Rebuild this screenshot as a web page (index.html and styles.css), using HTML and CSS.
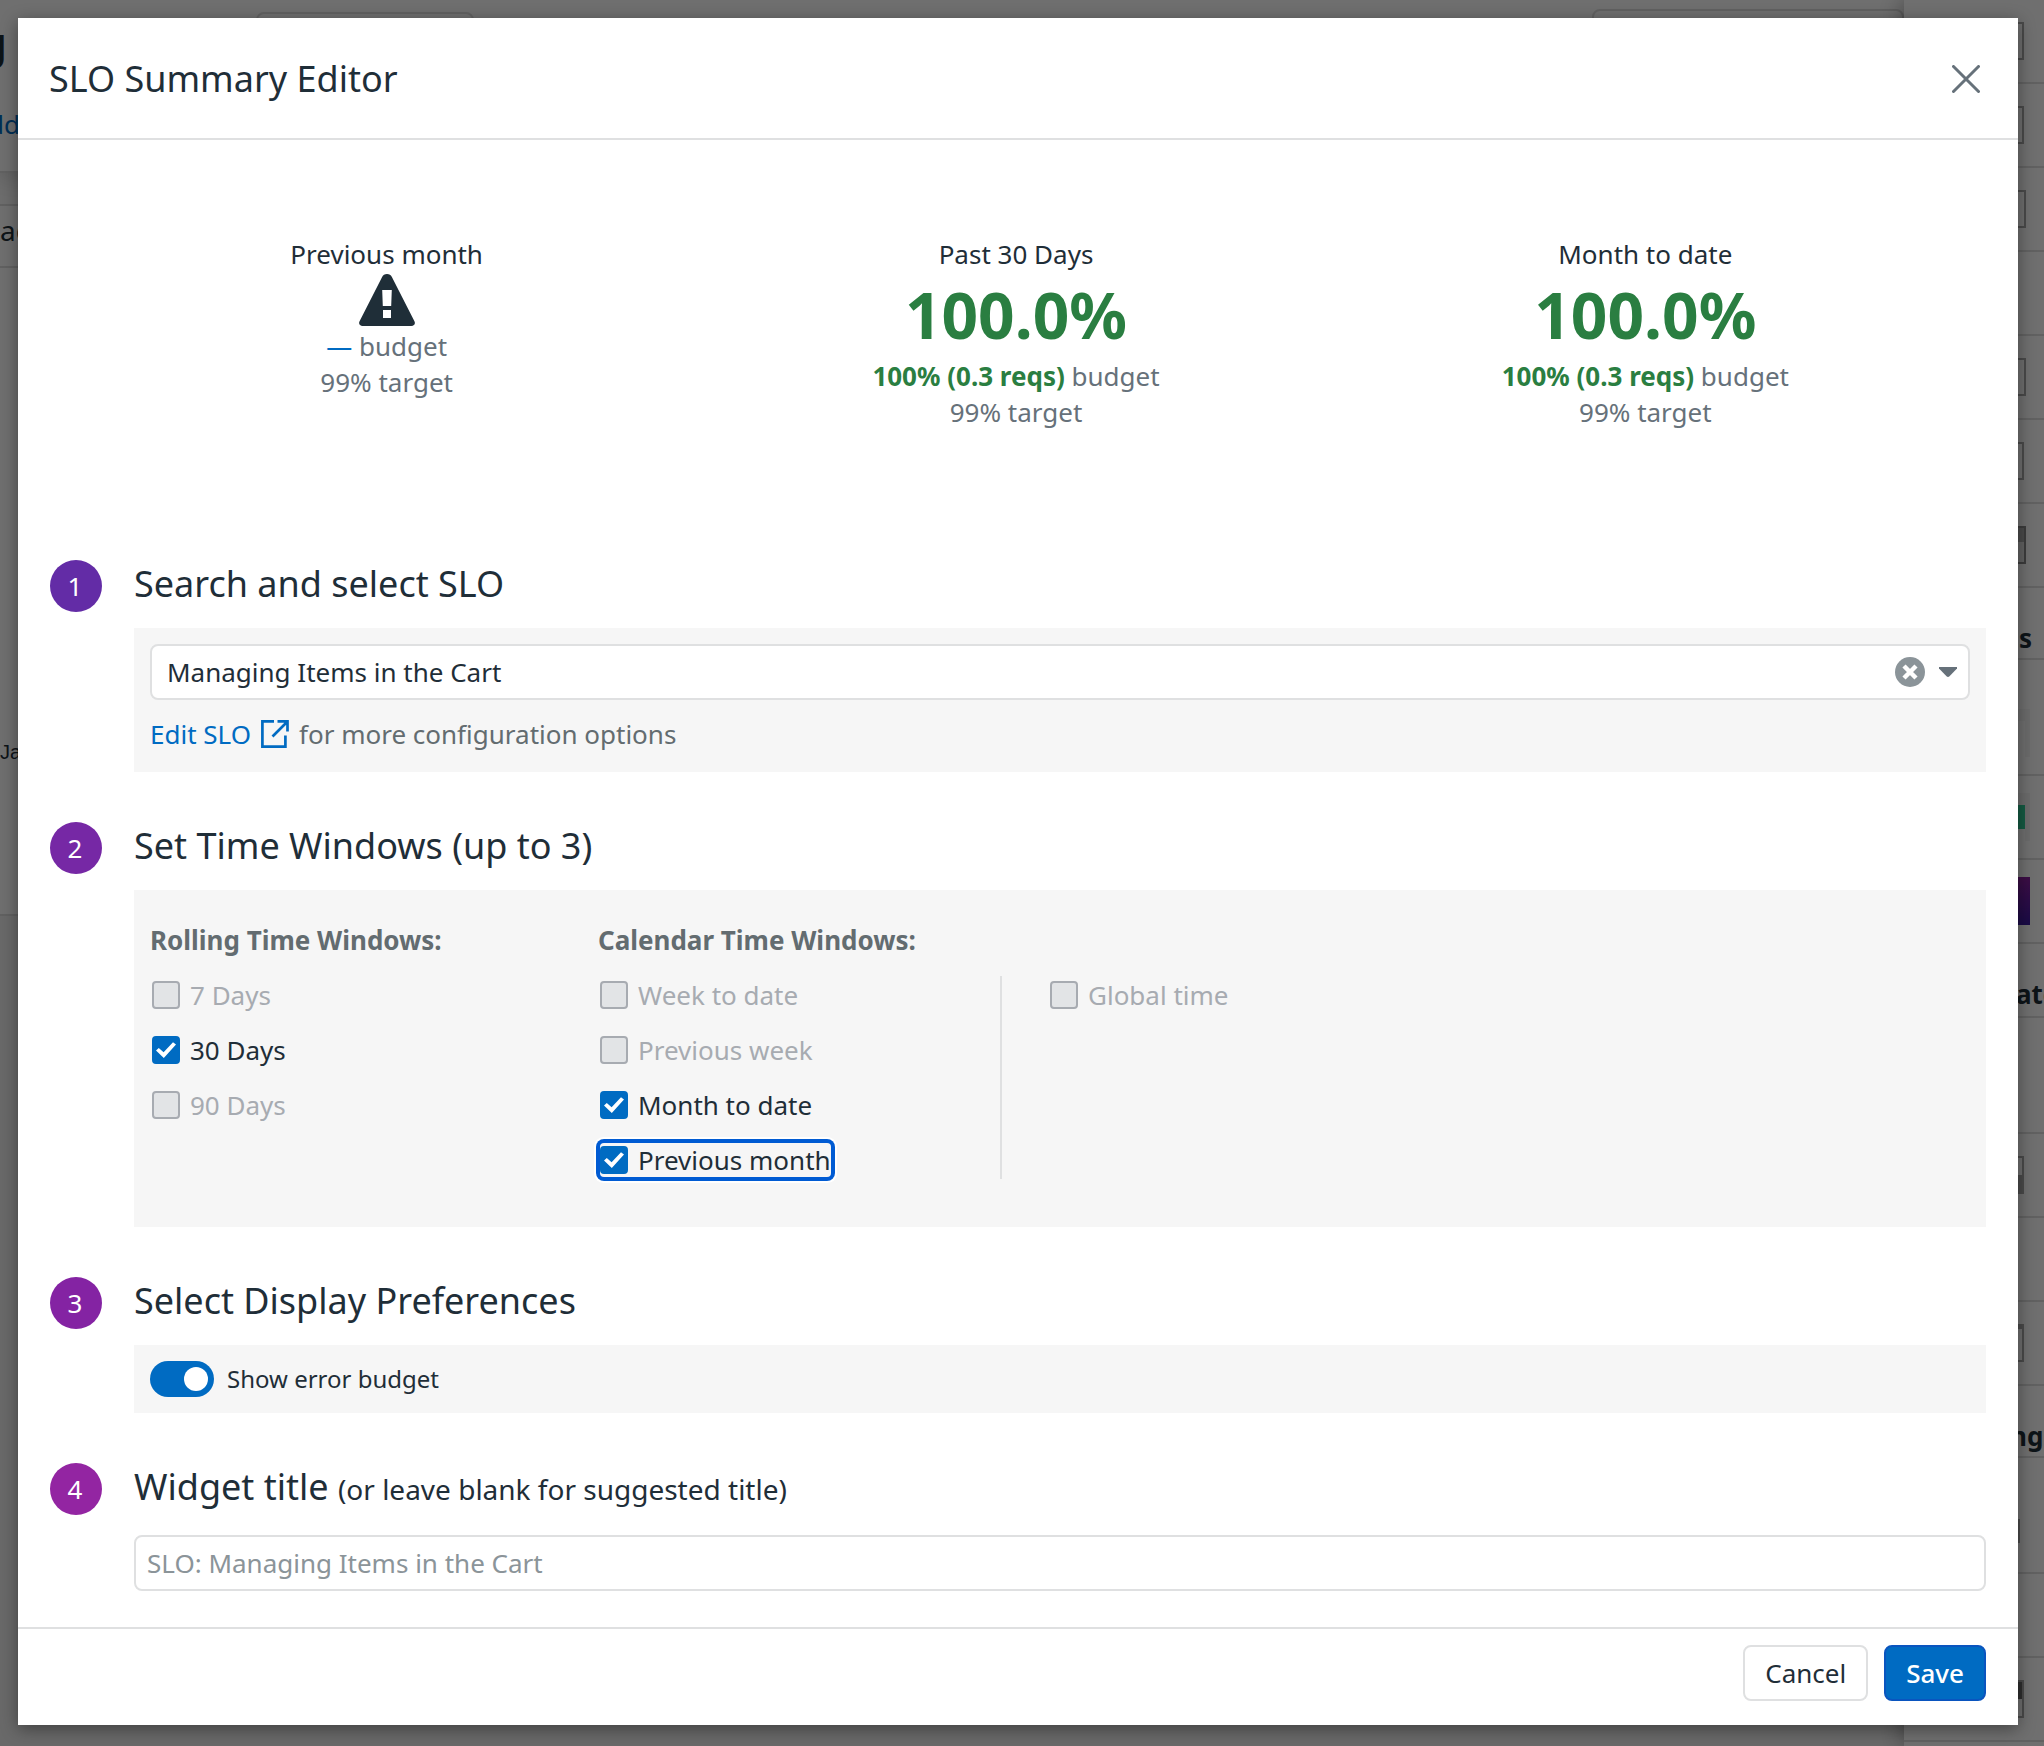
FILE: index.html
```html
<!DOCTYPE html>
<html lang="en">
<head>
<meta charset="utf-8">
<meta name="viewport" content="width=device-width, initial-scale=1">
<title>SLO Summary Editor</title>
<link rel="stylesheet" href="styles.css">
</head>
<body>
<div class="app">
  <!-- Dashboard underneath the dialog -->
  <div class="dashboard" aria-hidden="true">
    <div class="board">
      <div class="board-head">
        <div class="board-name">g</div>
        <div class="board-action">dd</div>
        <div class="search-outline"></div>
        <div class="time-outline"></div>
      </div>
      <div class="board-filter">ag</div>
      <div class="board-chart">Ja</div>
      <div class="board-rest"></div>
    </div>
    <div class="tray">
      <div class="tray-row"><span class="thumb"></span></div>
      <div class="tray-row"><span class="thumb"></span></div>
      <div class="tray-row"><span class="thumb thumb-wide"></span></div>
      <div class="tray-row"></div>
      <div class="tray-row"><span class="thumb thumb-wide"></span></div>
      <div class="tray-row"><span class="thumb"></span></div>
      <div class="tray-row"><span class="thumb thumb-wide thumb-blocks"></span></div>
      <div class="tray-title tray-title-s">s</div>
      <div class="tray-row tray-row-first"><span class="tile"></span></div>
      <div class="tray-row"><span class="tile tile-green"></span></div>
      <div class="tray-row"><span class="tile tile-purple"></span></div>
      <div class="tray-title tray-title-ate">ate</div>
      <div class="tray-row tray-row-first"></div>
      <div class="tray-row"><span class="thumb thumb-area"></span></div>
      <div class="tray-row"></div>
      <div class="tray-row"><span class="thumb thumb-head"></span></div>
      <div class="tray-title tray-title-ng">ng</div>
      <div class="tray-row tray-row-first"><span class="thumb thumb-small"></span></div>
      <div class="tray-row"></div>
      <div class="tray-row"><span class="thumb thumb-dark"></span></div>
    </div>
  </div>
  <div class="scrim"></div>

  <form class="modal" role="dialog" aria-labelledby="dialog-title">
    <header class="modal-head">
      <h1 id="dialog-title">SLO Summary Editor</h1>
      <button type="button" class="close" aria-label="Close">
        <svg width="28" height="28" viewBox="0 0 28 28" fill="none" stroke="#66717a" stroke-width="3" stroke-linecap="round"><path d="M1.5 1.5 26.5 26.5M26.5 1.5 1.5 26.5"/></svg>
      </button>
    </header>

    <div class="modal-body">
      <div class="preview">
        <div class="stat">
          <div class="stat-label">Previous month</div>
          <svg class="stat-icon" width="56" height="52" viewBox="0 0 56 52"><path fill="#1f2e38" d="M28 0c2.3 0 4 1.200 5 3.200l22.300 43.800c1.500 2.700 0 5-3 5H3.700c-3 0-4.500-2.300-3-5L23 3.200C24 1.200 25.700 0 28 0z"/><path fill="#fff" d="M23.200 16h9.600l-.6 16h-8.400zM24 36h8v8h-8z"/></svg>
          <div class="stat-line"><span class="none">—</span> budget</div>
          <div class="stat-line">99% target</div>
        </div>
        <div class="stat">
          <div class="stat-label">Past 30 Days</div>
          <div class="stat-value">100.0%</div>
          <div class="stat-line"><b>100% (0.3 reqs)</b> budget</div>
          <div class="stat-line">99% target</div>
        </div>
        <div class="stat">
          <div class="stat-label">Month to date</div>
          <div class="stat-value">100.0%</div>
          <div class="stat-line"><b>100% (0.3 reqs)</b> budget</div>
          <div class="stat-line">99% target</div>
        </div>
      </div>

      <section class="step">
        <div class="step-number step-1">1</div>
        <div class="step-main">
          <h2><label for="slo">Search and select SLO</label></h2>
          <div class="panel panel-select">
            <div class="picker">
              <select id="slo"><option>Managing Items in the Cart</option></select>
              <button type="button" class="clear" aria-label="Clear">
                <svg width="30" height="30" viewBox="0 0 30 30"><circle cx="15" cy="15" r="15" fill="#8b9499"/><path d="m9 9 12 12M21 9 9 21" stroke="#fff" stroke-width="4.500"/></svg>
              </button>
              <svg width="18" height="10" viewBox="0 0 18 10"><path fill="#66717a" d="M0 0h18v1.500L10.500 9.300c-1 .9-2 .9-3 0L0 1.500z"/></svg>
            </div>
            <p class="edit-line"><a href="#edit">Edit SLO<svg width="28" height="28" viewBox="0 0 28 28" fill="none" stroke="#006bc2" stroke-width="2.700"><path d="M13 1.400H1.400v25.200h23V15.500M16.500 1.400h10v10M26 2 11.500 16.500"/></svg></a><span>for more configuration options</span></p>
          </div>
        </div>
      </section>

      <section class="step">
        <div class="step-number step-2">2</div>
        <div class="step-main">
          <h2>Set Time Windows (up to 3)</h2>
          <div class="panel panel-windows">
            <h3>Rolling Time Windows:</h3>
            <h3 class="second">Calendar Time Windows:</h3>
            <div class="options">
              <label class="option"><input type="checkbox" disabled>7 Days</label>
              <label class="option"><input type="checkbox" checked>30 Days</label>
              <label class="option"><input type="checkbox" disabled>90 Days</label>
            </div>
            <div class="options">
              <label class="option"><input type="checkbox" disabled>Week to date</label>
              <label class="option"><input type="checkbox" disabled>Previous week</label>
              <label class="option"><input type="checkbox" checked>Month to date</label>
              <label class="option option-focused"><input type="checkbox" checked>Previous month</label>
            </div>
            <div class="options options-divided">
              <label class="option"><input type="checkbox" disabled>Global time</label>
            </div>
          </div>
        </div>
      </section>

      <section class="step">
        <div class="step-number step-3">3</div>
        <div class="step-main">
          <h2>Select Display Preferences</h2>
          <div class="panel panel-display">
            <label class="toggle"><input type="checkbox" role="switch" checked>Show error budget</label>
          </div>
        </div>
      </section>

      <section class="step">
        <div class="step-number step-4">4</div>
        <div class="step-main step-main-title">
          <h2><label for="widget-title">Widget title <small>(or leave blank for suggested title)</small></label></h2>
          <input id="widget-title" class="text-field" type="text" placeholder="SLO: Managing Items in the Cart">
        </div>
      </section>
    </div>

    <footer class="modal-foot">
      <button type="button" class="button">Cancel</button>
      <button type="submit" class="button button-primary">Save</button>
    </footer>
  </form>
</div>
</body>
</html>
```

FILE: styles.css
```css
* { box-sizing: border-box; }

body {
  margin: 0;
  font-family: "Noto Sans", sans-serif;
  font-size: 26px;
  line-height: 36px;
  color: #1f2e38;
}

h1, h2, h3, p { margin: 0; }
h1, h2 { font-size: 36px; font-weight: 400; line-height: 48px; }
button, input, select { font: inherit; color: inherit; }
button { cursor: pointer; }
svg { display: block; flex: none; }

.app {
  position: relative;
  min-height: 100vh;
  padding: 18px 26px 20px 18px;
  overflow: hidden;
}

/* Dashboard */
.dashboard {
  position: absolute;
  inset: 0;
  display: flex;
  overflow: hidden;
  background: #f7f7f7;
}
.board { flex: 1; display: flex; flex-direction: column; }
.board-head {
  position: relative;
  height: 173px;
  padding-top: 12px;
  background: #fdfdfd;
  border-bottom: 2px solid #dcdcdc;
  box-shadow: 0 4px 20px rgba(0, 0, 0, .16);
}
.board-name,
.board-action { display: flex; justify-content: flex-end; }
.board-name { width: 7px; font-size: 44px; line-height: 60px; font-weight: 600; }
.board-action { width: 20px; margin-top: 34px; color: #006bc2; }
.search-outline, .time-outline {
  position: absolute;
  top: 12px;
  height: 56px;
  border: 2px solid #dcdcdc;
  border-radius: 8px;
}
.search-outline { left: 256px; width: 218px; }
.time-outline { top: 9px; left: 1592px; right: 0; }
.board-filter {
  height: 64px;
  margin-top: 31px;
  padding-top: 6px;
  border: solid #dcdcdc;
  border-width: 2px 0;
  background: #fdfdfd;
  font-size: 28px;
}
.board-chart {
  height: 648px;
  padding-top: 466px;
  border-bottom: 2px solid #dcdcdc;
  background: #fdfdfd;
  font-family: "Liberation Sans", sans-serif;
  font-size: 20px;
}
.board-rest { flex: 1; background: #f0f0f0; }

.tray {
  position: relative;
  flex: none;
  width: 140px;
  background: #fdfdfd;
  box-shadow: 0 0 24px rgba(0, 0, 0, .4);
}
.tray-row {
  display: flex;
  align-items: center;
  height: 84px;
  border-bottom: 2px solid #dcdcdc;
}
.tray-row-first { height: 116px; padding-top: 32px; }
.tray-title {
  height: 72px;
  padding-top: 32px;
  overflow: hidden;
  border-bottom: 2px solid #dcdcdc;
  font-weight: 700;
}
.tray-title-s { padding-left: 115px; }
.tray-title-ate { height: 74px; padding-left: 112px; }
.tray-title-ng { padding-left: 106px; }
.thumb { width: 60px; height: 38px; margin-left: 60px; border: 2px solid #a8a8a8; }
.thumb-wide { width: 62px; }
.thumb-blocks { background: linear-gradient(#a8a8a8 40%, #dcdcdc 40%); border-color: #888; }
.thumb-area { background: linear-gradient(#fdfdfd 50%, #a8a8a8 50%); }
.thumb-head { border-top-width: 5px; }
.thumb-small { width: 56px; height: 24px; }
.thumb-dark { background: linear-gradient(#6a6a6a 50%, #fdfdfd 50%); }
.tile { width: 66px; height: 48px; margin-left: 60px; border: solid #f3f3f3; border-width: 12px 5px 0 0; }
.tile-green { background: linear-gradient(#2fce96 24px, #fdfdfd 24px); }
.tile-purple { border: 0; background: linear-gradient(#8a1f9e, #3a1aa0); }

.scrim { position: absolute; inset: 0; background: rgba(0, 0, 0, .56); }

/* Dialog */
.modal {
  position: relative;
  background: #fff;
  box-shadow: 0 4px 16px rgba(0, 0, 0, .4);
}
.modal-head {
  display: flex;
  align-items: center;
  justify-content: space-between;
  height: 122px;
  padding: 2px 38px 0 31px;
  border-bottom: 2px solid #dfe0e1;
}
.close, .clear { padding: 0; border: 0; background: none; }
.modal-body {
  display: flex;
  flex-direction: column;
  gap: 50px;
  padding: 96px 32px 36px;
}

/* Preview */
.preview {
  display: grid;
  grid-template-columns: repeat(3, 1fr);
  min-height: 274px;
  padding: 0 26px 0 22px;
  text-align: center;
}
.stat-icon { margin: 2px auto; }
.stat-value { font-size: 64px; line-height: 86px; font-weight: 700; color: #2a7e41; }
.stat-line { color: #66717a; }
.stat-line b { color: #2a7e41; }
.none { color: #006bc2; }

/* Steps */
.step { display: grid; grid-template-columns: 52px 1fr; column-gap: 32px; }
.step-number {
  width: 52px;
  height: 52px;
  padding-right: 2px;
  border-radius: 50%;
  color: #fff;
  line-height: 52px;
  text-align: center;
}
.step-1 { background: #632ca6; }
.step-2 { background: #7628a5; }
.step-3 { background: #8423a3; }
.step-4 { background: #9325a2; }
.step-main { display: flex; flex-direction: column; gap: 20px; }
.step-main-title { gap: 24px; }
h2 small { font-size: 28px; line-height: 28px; }
.panel { background: #f6f6f6; }

.panel-select { padding: 16px 16px 20px; }
.picker {
  display: flex;
  align-items: center;
  gap: 14px;
  height: 56px;
  padding: 0 11px 0 15px;
  border: 2px solid #dfe0e1;
  border-radius: 8px;
  background: #fff;
}
.picker select {
  flex: 1;
  height: 52px;
  padding: 0;
  border: 0;
  outline: 0;
  appearance: none;
  background: none;
}
.edit-line { display: flex; gap: 10px; margin-top: 16px; color: #636c70; }
.edit-line a { display: flex; align-items: center; gap: 10px; color: #006bc2; text-decoration: none; }

.panel-windows {
  display: grid;
  grid-template-columns: 448px 402px 1fr;
  row-gap: 18px;
  padding: 32px 16px 48px;
}
h3 { font-size: 26px; line-height: 36px; color: #636c70; }
h3.second { grid-column: 2 / 4; }
.options {
  display: flex;
  flex-direction: column;
  align-items: flex-start;
  gap: 21px;
  padding: 2px;
}
.options-divided { padding-left: 48px; border-left: 2px solid #dfe0e1; }
.option { display: flex; align-items: center; gap: 10px; height: 34px; }
.option:has(:disabled) { color: #a7abb1; }
.option input {
  display: grid;
  width: 28px;
  height: 28px;
  margin: 0;
  appearance: none;
  border: 2px solid #a7abb1;
  border-radius: 4px;
  background: #e2e4e6;
}
.option input:checked { border-color: #006bc2; background: #006bc2; }
.option input:checked::before {
  content: "";
  width: 20px;
  height: 16px;
  margin: auto;
  background: #fff;
  clip-path: polygon(0 53%, 14% 38%, 38% 64%, 85% 2%, 100% 16%, 39% 100%);
}
.option-focused { border-radius: 4px; box-shadow: 0 0 0 4px #005bd3, 0 0 0 6px #fff; }

.panel-display { padding: 16px; }
.toggle { display: flex; gap: 13px; font-size: 24px; }
.toggle input {
  display: flex;
  align-items: center;
  justify-content: flex-end;
  width: 64px;
  height: 36px;
  margin: 0;
  padding: 0 6px;
  appearance: none;
  border-radius: 18px;
  background: #006bc2;
}
.toggle input::before { content: ""; width: 24px; height: 24px; border-radius: 50%; background: #fff; }

.text-field {
  width: 100%;
  height: 56px;
  padding: 0 11px;
  border: 2px solid #dfe0e1;
  border-radius: 8px;
  background: #fff;
}
.text-field::placeholder { color: #8b9499; opacity: 1; }

.modal-foot {
  display: flex;
  justify-content: flex-end;
  gap: 16px;
  padding: 16px 32px 24px;
  border-top: 2px solid #dfe0e1;
}
.button {
  height: 56px;
  padding: 0 20px;
  border: 2px solid #dfe0e1;
  border-radius: 8px;
  background: #fff;
}
.button-primary { border-color: #0a55bf; background: #006bc2; color: #fff; font-weight: 500; }
```
